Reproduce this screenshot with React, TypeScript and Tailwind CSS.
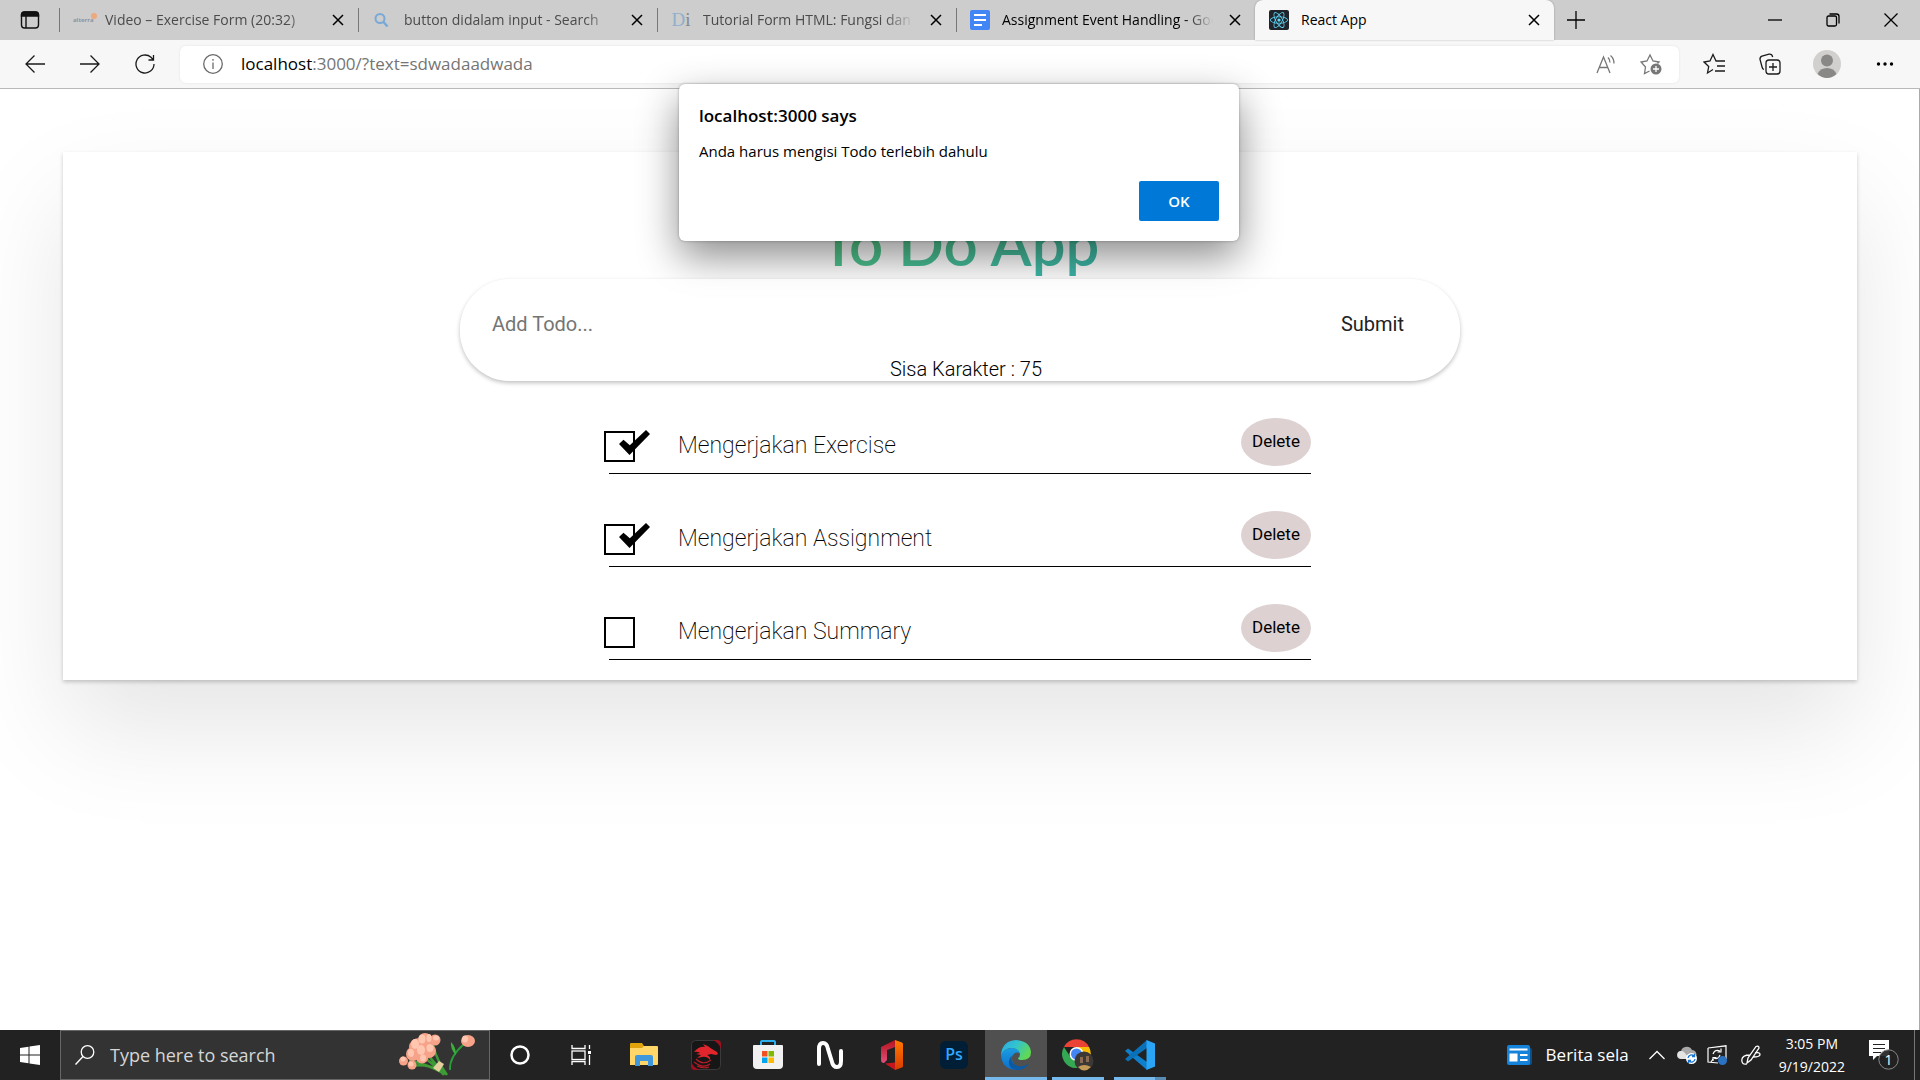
import React, { useState } from "react";
import { FaReact } from "react-icons/fa";

type IconProps = { className?: string; children: React.ReactNode; box?: string };

function Line({ className = "size-5", children, box = "0 0 20 20" }: IconProps) {
  return (
    <svg viewBox={box} className={className} fill="none" stroke="currentColor" strokeWidth="1.3" aria-hidden="true">
      {children}
    </svg>
  );
}

function CloseIcon({ className = "size-3" }: { className?: string }) {
  return (
    <svg viewBox="0 0 12 12" className={className} fill="none" stroke="currentColor" strokeWidth="1.5" aria-hidden="true">
      <path d="M1 1l10 10M11 1L1 11" />
    </svg>
  );
}

/* ---------- Tab strip ---------- */

const tabs = [
  {
    title: "Video – Exercise Form (20:32)",
    tone: "text-[#4b4b4b]",
    icon: (
      <span className="relative block w-5 text-[6px] leading-[6px] font-bold text-[#8e93a3]">
        alterra
        <span className="absolute -top-1 -right-1 size-1.5 rounded-full bg-[#eda87c]" />
      </span>
    ),
  },
  {
    title: "button didalam input - Search",
    tone: "text-[#4b4b4b]",
    icon: (
      <svg viewBox="0 0 20 20" className="size-5" fill="none" stroke="#79a9d6" aria-hidden="true">
        <circle cx="8" cy="8.500" r="4.500" strokeWidth="2" />
        <path d="M11.500 12l4 4.500" strokeWidth="2.500" />
      </svg>
    ),
  },
  {
    title: "Tutorial Form HTML: Fungsi dan Cara",
    tone: "text-[#4b4b4b]",
    icon: (
      <span className="font-['Liberation_Serif',serif] text-[19px] leading-5 text-[#8fb0cc]">
        D<span className="text-[#888]">i</span>
      </span>
    ),
  },
  {
    title: "Assignment Event Handling - Google Docs",
    tone: "text-black",
    icon: (
      <svg viewBox="0 0 20 20" className="size-5" aria-hidden="true">
        <rect width="20" height="20" rx="2" fill="#4285f4" />
        <path d="M4 5h12M4 10h12M4 15h8" stroke="#fff" strokeWidth="2.200" />
      </svg>
    ),
  },
];

function TabStrip() {
  return (
    <div className="flex h-10 items-stretch bg-[#cdcdcd] text-[14px]">
      <button aria-label="Tab actions" className="flex w-[59px] shrink-0 items-center justify-center">
        <svg viewBox="0 0 20 20" className="size-5" fill="none" stroke="#111" strokeWidth="1.400" aria-hidden="true">
          <rect x="1.500" y="2" width="17" height="16" rx="3" />
          <path d="M1.500 6V5a3 3 0 0 1 3-3h11a3 3 0 0 1 3 3v1z" fill="#111" />
          <path d="M6 6v12" />
        </svg>
      </button>
      {tabs.map((tab) => (
        <div key={tab.title} className="relative flex w-[299px] min-w-0 items-center px-3.5 pb-px">
          <span className="absolute top-2 left-0 h-6 w-px bg-[#777]" />
          <span className="flex w-5 shrink-0 justify-center">{tab.icon}</span>
          <a
            href="#tab"
            className={
              "ml-3 flex-1 overflow-hidden whitespace-nowrap [mask-image:linear-gradient(to_right,#000_86%,transparent)] " +
              tab.tone
            }
          >
            {tab.title}
          </a>
          <button aria-label="Close tab" className="ml-4 shrink-0 text-black">
            <CloseIcon />
          </button>
        </div>
      ))}
      <div className="flex w-[299px] min-w-0 items-center rounded-t-lg bg-[#f7f7f7] px-3.5 pb-px shadow-[0_0_2px_rgba(0,0,0,0.3)]">
        <span className="flex size-5 shrink-0 items-center justify-center rounded-xs bg-[#20232a] text-[#61dafb]">
          <FaReact className="size-4.5" />
        </span>
        <a href="#tab" className="ml-3 flex-1 text-black">
          React App
        </a>
        <button aria-label="Close tab" className="text-black">
          <CloseIcon />
        </button>
      </div>
      <button aria-label="New tab" className="ml-3 flex items-center">
        <Line>
          <path d="M10 1v18M1 10h18" />
        </Line>
      </button>
      <div className="ml-auto flex">
        <button aria-label="Minimize" className="flex w-[58px] items-center justify-center">
          <Line className="size-[14px]" box="0 0 14 14">
            <path d="M0 7h14" />
          </Line>
        </button>
        <button aria-label="Restore" className="flex w-[58px] items-center justify-center">
          <Line className="size-[14px]" box="0 0 14 14">
            <rect x="1" y="3" width="9.500" height="10" rx="1.500" />
            <path d="M3.500 1h7q2.500 0 2.500 2.500v7" />
          </Line>
        </button>
        <button aria-label="Close window" className="flex w-[58px] items-center justify-center">
          <Line className="size-[14px]" box="0 0 14 14">
            <path d="M.5.500l13 13M13.500.500l-13 13" />
          </Line>
        </button>
      </div>
    </div>
  );
}

/* ---------- Address bar ---------- */

function AddressBar() {
  return (
    <div className="flex h-[49px] items-center border-b border-[#b9b9b9] bg-[#f7f7f7] pl-[7px] text-[#1b1b1b]">
      <button aria-label="Back" className="flex w-[55px] justify-center">
        <Line>
          <path d="M20 10H1M9.500 1.500L1 10l8.500 8.500" />
        </Line>
      </button>
      <button aria-label="Forward" className="flex w-[55px] justify-center">
        <Line>
          <path d="M0 10h19M10.500 1.500L19 10l-8.500 8.500" />
        </Line>
      </button>
      <button aria-label="Refresh" className="flex w-[55px] justify-center">
        <Line>
          <path d="M19 10a9 9 0 1 1-3-6.700L18.500 6M18.500 1v5h-5" />
        </Line>
      </button>
      <div className="ml-2 flex h-[37px] min-w-0 flex-1 items-center rounded-md bg-white pr-[17px] pl-[23px] shadow-[0_0_3px_rgba(0,0,0,0.08)]">
        <Line className="size-5 shrink-0 text-[#6b6b6b]">
          <circle cx="10" cy="10" r="9.300" />
          <path d="M10 8.500V15M10 5v1.800" />
        </Line>
        <a href="#address" className="ml-[18px] flex-1 text-[17px] text-[#757575]">
          <span className="text-black">localhost</span>:3000/?text=sdwadaadwada
        </a>
        <button aria-label="Read aloud" className="mr-6 text-[#777]">
          <Line>
            <path d="M1 19L7.500 3 14 19M3.300 13.500h8.400M12 3.500c1.500 1.500 2 3 2 5M14.500 1.500c2.500 2 3.500 4.500 3.500 8" />
          </Line>
        </button>
        <button aria-label="Add to favorites" className="text-[#777]">
          <Line className="size-[22px]" box="0 0 22 22">
            <path d="M9.500 18l-5 2.500 1-6.500L1 9l6-1 3-6 3 6 6 1-1.500 1.500" />
            <circle cx="16" cy="16" r="5.500" fill="currentColor" stroke="none" />
            <path d="M16 13v6M13 16h6" stroke="#fff" />
          </Line>
        </button>
      </div>
      <div className="flex shrink-0 items-center pr-1.5 pl-[7px]">
        <button aria-label="Favorites" className="flex w-14 justify-center">
          <Line className="size-[22px]" box="0 0 22 22">
            <path d="M10 16.500l-5.500 3.500 1.200-6.500L1 9l6-1 3-6.500L13 8M12.500 8H22M14 13h8M12 18h10" />
          </Line>
        </button>
        <button aria-label="Collections" className="flex w-14 justify-center">
          <Line className="size-[22px]" box="0 0 22 22">
            <rect x="7" y="7" width="14" height="14" rx="3" />
            <path d="M14 10v8M10 14h8M5 16.500Q3.500 16 3.200 14.500L1 6.500Q.8 4 3 3.200l7-2Q13 .8 13.700 4" />
          </Line>
        </button>
        <button aria-label="Profile" className="flex w-[58px] justify-center">
          <svg viewBox="0 0 28 28" className="size-7" aria-hidden="true">
            <circle cx="14" cy="14" r="14" fill="#d2d0ce" />
            <circle cx="14" cy="10.500" r="6" fill="#8a8886" />
            <path d="M4.500 24Q7 18 14 18t9.500 6Q19 28 14 28t-9.500-4z" fill="#8a8886" />
          </svg>
        </button>
        <button aria-label="Settings" className="flex w-[58px] justify-center">
          <svg viewBox="0 0 18 4" className="w-[18px]" aria-hidden="true">
            <circle cx="2.500" cy="2" r="1.700" />
            <circle cx="9" cy="2" r="1.700" />
            <circle cx="15.500" cy="2" r="1.700" />
          </svg>
        </button>
      </div>
    </div>
  );
}

function AlertDialog() {
  return (
    <div
      role="alertdialog"
      aria-labelledby="alert-title"
      className="absolute top-[84px] left-1/2 z-10 flex w-[560px] -translate-x-[calc(50%+1px)] flex-col rounded-md bg-white p-5 text-black shadow-[0_0_3px_rgba(0,0,0,0.3),0_16px_40px_rgba(0,0,0,0.45)]"
    >
      <h2 id="alert-title" className="text-[17px] leading-6 font-semibold">
        localhost:3000 says
      </h2>
      <p className="mt-[11px] text-[15px] leading-6">Anda harus mengisi Todo terlebih dahulu</p>
      <button className="mt-[18px] h-10 w-20 self-end rounded-xs bg-[#0078d7] text-[15px] font-semibold text-white">
        OK
      </button>
    </div>
  );
}

/* ---------- To Do card ---------- */

const initialTodos = [
  { id: "exercise", title: "Mengerjakan Exercise", done: true },
  { id: "assignment", title: "Mengerjakan Assignment", done: true },
  { id: "summary", title: "Mengerjakan Summary", done: false },
];

function TodoCard() {
  const [todos, setTodos] = useState(initialTodos);
  const toggle = (id: string) => setTodos(todos.map((t) => (t.id === id ? { ...t, done: !t.done } : t)));

  return (
    <section className="mt-[63px] mr-[62px] ml-[63px] flex flex-col items-center bg-white pt-[55px] pb-5 font-['Roboto',sans-serif] font-light text-black shadow-[0_2px_4px_rgba(0,0,0,0.2),0_50px_100px_rgba(0,0,0,0.1)]">
      <h1 className="bg-linear-to-br from-[#5ecf70] to-[#38b2ac] bg-clip-text font-['Lato',sans-serif] text-[60px] leading-[72px] font-semibold text-transparent">
        To Do App
      </h1>
      <form
        onSubmit={(e) => e.preventDefault()}
        className="relative z-20 w-full max-w-[1000px] rounded-[50px] bg-white/65 shadow-[0_2px_4px_rgba(0,0,0,0.25)]"
      >
        <div className="flex h-[78px] items-center pt-3 pr-14 pl-8 text-[20px] font-normal">
          <input
            aria-label="Add Todo"
            placeholder="Add Todo..."
            className="min-w-0 flex-1 bg-transparent outline-none placeholder:text-[#757575]"
          />
          <button className="text-[#222]">Submit</button>
        </div>
        <p className="pl-3 text-center text-[20px] leading-6">Sisa Karakter : 75</p>
      </form>
      <ul className="w-full max-w-[702px]">
        {todos.map((todo) => (
          <li key={todo.id} className="flex items-end border-b border-black pt-[37px] pb-[7px]">
            <span className="relative mb-1 -ml-[5px] size-[31px] shrink-0">
              <input
                id={todo.id}
                type="checkbox"
                checked={todo.done}
                onChange={() => toggle(todo.id)}
                className="block size-[31px] appearance-none border-2 border-black"
              />
              {todo.done && (
                <svg
                  viewBox="0 0 31 25"
                  className="pointer-events-none absolute -top-px left-[15px] h-[25px] w-[31px]"
                  aria-hidden="true"
                >
                  <path d="M0 14l4.500-4.300 6.300 5.600L27 0l4 4-20.500 21z" />
                </svg>
              )}
            </span>
            <label htmlFor={todo.id} className="mb-1 ml-[43px] flex-1 text-[23px] leading-8 font-extralight">
              {todo.title}
            </label>
            <button
              aria-label={"Delete " + todo.title}
              onClick={() => setTodos(todos.filter((t) => t.id !== todo.id))}
              className="h-12 w-[70px] rounded-[50%] bg-[#ddd1d1] text-[17px] font-normal"
            >
              Delete
            </button>
          </li>
        ))}
      </ul>
    </section>
  );
}

/* ---------- Taskbar ---------- */

function Flowers() {
  return (
    <svg viewBox="0 0 76 44" className="h-11 w-[76px]" aria-hidden="true">
      <g stroke="#3d9b35" strokeWidth="2.500" fill="none">
        <path d="M10 28Q26 30 46 41M18 20Q32 28 45 42M28 20Q36 32 47 41M34 12Q38 28 48 42M12 33Q26 30 44 38" />
        <path d="M51 37Q50 24 65 11" stroke="#2c9a3a" strokeWidth="1.800" />
        <path d="M57 22Q51 16 52 9Q57 14 57 22z" fill="#3fae3d" stroke="none" />
      </g>
      <path d="M34 35l6-7 5 3-5 8z" fill="#e6cf9f" />
      <g fill="#f7a38a">
        <ellipse cx="20" cy="14" rx="10" ry="9" />
        <circle cx="14" cy="21" r="7" />
        <circle cx="26" cy="7" r="7" />
        <circle cx="30" cy="18" r="7" />
        <circle cx="23" cy="24" r="6.500" />
        <circle cx="36" cy="7" r="5.500" />
        <circle cx="4.500" cy="28" r="4.500" />
        <circle cx="13" cy="32" r="4.500" />
        <ellipse cx="69" cy="8" rx="7" ry="6" />
      </g>
      <g fill="#ffc6b0">
        <ellipse cx="16" cy="11" rx="4" ry="5" />
        <ellipse cx="23" cy="6" rx="3.500" ry="4.500" />
        <ellipse cx="30" cy="5" rx="2.500" ry="4" />
        <ellipse cx="31" cy="15" rx="3.500" ry="4" />
        <ellipse cx="22" cy="17" rx="4" ry="5" />
        <ellipse cx="12" cy="20" rx="3" ry="4" />
        <ellipse cx="24" cy="25" rx="3" ry="3.500" />
        <ellipse cx="37" cy="5" rx="3" ry="2.500" />
        <circle cx="4" cy="26" r="2.500" />
        <circle cx="12" cy="31" r="2.500" />
        <ellipse cx="66" cy="6" rx="3" ry="3.500" />
      </g>
    </svg>
  );
}

const apps = [
  {
    name: "Cortana",
    state: "idle",
    icon: (
      <svg viewBox="0 0 30 30" className="size-[30px]" fill="none" aria-hidden="true">
        <circle cx="15" cy="15" r="8.500" stroke="#fff" strokeWidth="2.500" />
      </svg>
    ),
  },
  {
    name: "Task View",
    state: "idle",
    icon: (
      <svg viewBox="0 0 22 20" className="h-5 w-[22px]" fill="none" stroke="#fff" strokeWidth="1.300" aria-hidden="true">
        <path d="M1 0v3.500h13V0M1 20v-3.500h13V20M18.500 0v4M18.500 10v10" />
        <rect x="1" y="6" width="13" height="8.500" />
        <path d="M17 6h3v3h-3z" fill="#fff" stroke="none" />
      </svg>
    ),
  },
  {
    name: "File Explorer",
    state: "idle",
    icon: (
      <svg viewBox="0 0 28 24" className="h-6 w-7" aria-hidden="true">
        <path d="M0 1q0-1 1-1h11l2 3v3H0z" fill="#e0a30c" />
        <path d="M0 5h12l2-2h13q1 0 1 1v17q0 1-1 1H0z" fill="#ffd667" />
        <path d="M5 23v-9q0-2 2-2h14q2 0 2 2v9h-5v-5h-8v5z" fill="#3f97dc" />
      </svg>
    ),
  },
  {
    name: "Dragon Center",
    state: "idle",
    icon: (
      <svg viewBox="0 0 30 30" className="size-[30px]" aria-hidden="true">
        <rect x=".5" y=".5" width="29" height="29" rx="4" fill="#161616" stroke="#3a3a3a" />
        <path d="M22 0h4q4 0 4 4v5q-2-6-8-9zM0 22v4q0 4 4 4h5q-7-3-9-8z" fill="#9d1020" />
        <path d="M3 12Q8 6 14 7l-2-3q6 2 9 5l5 3 1 2-2 1-5-1-4 1q4 2 3 5-3-4-8-3l-5 1 4-3-5-1 4-1q-3-2-6-1z" fill="#e0262c" />
        <path d="M5 19q7 7 15 1M3 22q9 7 16 2M6 26q7 3 12 1" stroke="#b81c26" strokeWidth="1.100" fill="none" />
      </svg>
    ),
  },
  {
    name: "Microsoft Store",
    state: "idle",
    icon: (
      <svg viewBox="0 0 30 30" className="size-[30px]" aria-hidden="true">
        <path d="M8 6V2q0-1 1-1h12q1 0 1 1v4" stroke="#2bb0ee" strokeWidth="2" fill="none" />
        <path d="M0 6q0-1 1-1h28q1 0 1 1v19q0 4-4 4H4q-4 0-4-4z" fill="#f1f1f1" />
        <path d="M9 11h5.500v5.500H9z" fill="#f25022" />
        <path d="M15.500 11H21v5.500h-5.500z" fill="#7fba00" />
        <path d="M9 17.500h5.500V23H9z" fill="#00a4ef" />
        <path d="M15.500 17.500H21V23h-5.500z" fill="#ffb900" />
      </svg>
    ),
  },
  {
    name: "Nahimic",
    state: "idle",
    icon: (
      <svg viewBox="0 0 30 30" className="size-[30px]" fill="none" stroke="#fff" strokeWidth="4" strokeLinecap="round" aria-hidden="true">
        <path d="M4 24V9Q4 3 8 3t5 6l4 13q1 5 5 5t4-6V11" />
      </svg>
    ),
  },
  {
    name: "Office",
    state: "idle",
    icon: (
      <svg viewBox="0 0 24 30" className="h-[30px] w-6" aria-hidden="true">
        <defs>
          <linearGradient id="office-left" x1="0" y1="0" x2="0" y2="1">
            <stop offset="0" stopColor="#b5121b" />
            <stop offset="1" stopColor="#e0507c" />
          </linearGradient>
          <linearGradient id="office-right" x1="0" y1="0" x2="0" y2="1">
            <stop offset="0" stopColor="#ff7a00" />
            <stop offset="1" stopColor="#d83b01" />
          </linearGradient>
        </defs>
        <path d="M1 7L15 0v7L7 10v10l-3 3q-3 0-3-3z" fill="url(#office-left)" />
        <path d="M15 0l7 2.500q1 .5 1 1.500v22q0 1-1 1.500L15 30z" fill="url(#office-right)" />
        <path d="M5 23.500l10-1V30z" fill="#c4161c" />
      </svg>
    ),
  },
  {
    name: "Photoshop",
    state: "idle",
    icon: (
      <span className="flex h-7 w-7 items-center justify-center rounded-md bg-[#001e36] pb-0.5 text-[16px] font-semibold text-[#31a8ff]">
        Ps
      </span>
    ),
  },
  {
    name: "Microsoft Edge",
    state: "active",
    icon: (
      <svg viewBox="0 0 30 30" className="size-[30px]" aria-hidden="true">
        <defs>
          <linearGradient id="edge-top" x1="0" y1="0" x2="1" y2=".5">
            <stop offset="0" stopColor="#2aa7e6" />
            <stop offset=".5" stopColor="#33c3cf" />
            <stop offset="1" stopColor="#5fd954" />
          </linearGradient>
          <linearGradient id="edge-body" x1="0" y1="0" x2="0" y2="1">
            <stop offset="0" stopColor="#1b9de2" />
            <stop offset="1" stopColor="#0d6fc9" />
          </linearGradient>
        </defs>
        <path d="M0 15Q1 1 15 0q14 1 15 12 0 8-9 8-4 0-4-2 2-1 2-4-2-6-9-6Q4 8 0 15z" fill="url(#edge-top)" />
        <path d="M0 15q3-7 11-7 6 0 8 5-6-2-8 4-1 8 9 12-3 1-5 1Q1 29 0 15z" fill="url(#edge-body)" />
        <path d="M11 16q-2 8 6 10 6 1 10-2 1 0 0 1-4 5-11 5-9-1-8-9 0-3 3-5z" fill="#0c59a4" />
      </svg>
    ),
  },
  {
    name: "Google Chrome",
    state: "open",
    icon: (
      <svg viewBox="0 0 32 32" className="size-8" aria-hidden="true">
        <path d="M2 8A14 14 0 0 1 27 8H15z" fill="#ea4335" />
        <path d="M27 8a14 14 0 0 1-12 21l6-12-6-9z" fill="#fbbc05" />
        <path d="M2 8a14 14 0 0 0 13 21l6-10-12 0z" fill="#34a853" />
        <circle cx="14.500" cy="15" r="7" fill="#fff" />
        <circle cx="14.500" cy="15" r="5.500" fill="#4285f4" />
        <circle cx="22" cy="22" r="9.500" fill="#3c3836" />
        <path d="M16 28q6-4 13 0-7 7-13 0z" fill="#c39a58" />
        <path d="M18 18h3v6h-3zM24 17h3v6h-3z" fill="#8b6b52" />
      </svg>
    ),
  },
  {
    name: "Visual Studio Code",
    state: "grouped",
    icon: (
      <svg viewBox="0 0 30 30" className="size-[30px]" aria-hidden="true">
        <path d="M0 11L3 8.500 22 22v8z" fill="#0f7fcb" />
        <path d="M22 0v8L3 21.500 0 19z" fill="#0a70b8" />
        <path d="M21.500 0L30 3.500v23L21.500 30z" fill="#2aa4f4" />
      </svg>
    ),
  },
];

function Taskbar() {
  return (
    <footer className="flex h-[50px] shrink-0 items-stretch bg-[#222] text-white">
      <button aria-label="Start" className="flex w-[60px] shrink-0 items-center justify-center">
        <svg viewBox="0 0 20 20" className="size-5" fill="#fff" aria-hidden="true">
          <path d="M0 3l8.500-1.300v7.800H0zM9.500 1.500L20 0v9.500H9.500zM0 10.500h8.500v7.800L0 17zM9.500 10.500H20V20L9.500 18.500z" />
        </svg>
      </button>
      <label className="flex w-[430px] shrink-0 items-center border border-[#666] bg-[#333] pr-3.5 pl-3.5">
        <Line className="size-5 shrink-0 text-white">
          <circle cx="12.500" cy="7" r="6.300" />
          <path d="M8 11.500L.5 19.500" />
        </Line>
        <input
          aria-label="Type here to search"
          placeholder="Type here to search"
          className="ml-[15px] min-w-0 flex-1 bg-transparent text-[18px] outline-none placeholder:text-[#d6d6d6]"
        />
        <Flowers />
      </label>
      <nav className="-ml-px flex" aria-label="Applications">
        {apps.map((app) => (
          <button
            key={app.name}
            aria-label={app.name}
            className={
              "relative flex w-[62px] items-center justify-center " + (app.state === "active" ? "bg-[#505050]" : "")
            }
          >
            {app.icon}
            {app.state === "active" && <span className="absolute inset-x-0 bottom-0 h-[3px] bg-[#76b9ed]" />}
            {app.state === "open" && <span className="absolute inset-x-[5px] bottom-0 h-[3px] bg-[#76b9ed]" />}
            {app.state === "grouped" && (
              <span className="absolute inset-x-[5px] bottom-0 h-[3px] border-r-[11px] border-[#5a8bb2] bg-[#76b9ed]" />
            )}
          </button>
        ))}
      </nav>
      <div className="ml-auto flex items-center">
        <button className="flex items-center text-[17px]">
          <svg viewBox="0 0 25 20" className="mr-3.5 h-5 w-[25px]" aria-hidden="true">
            <rect x="3" y="3" width="22" height="17" rx="2" fill="#0c4f86" />
            <rect width="23" height="20" rx="2" fill="#1583da" />
            <path d="M2.500 4.500h18M13 10h7.500M13 15h7.500" stroke="#fff" strokeWidth="2" />
            <rect x="2.500" y="8.500" width="8" height="8" fill="#fff" />
          </svg>
          Berita sela
        </button>
        <button aria-label="Show hidden icons" className="ml-5">
          <Line className="h-2.5 w-4" box="0 0 16 10">
            <path d="M.5 9L8 1.500 15.500 9" />
          </Line>
        </button>
        <svg viewBox="0 0 20 18" className="ml-3 h-[18px] w-5" aria-hidden="true">
          <path d="M4 13a4 4 0 0 1 0-8 6 6 0 0 1 11-1 4.500 4.500 0 0 1 2 8.500z" fill="#a8a8a8" />
          <path d="M4 13a4 4 0 1 1 3-7l6 7z" fill="#e4e4e4" />
          <circle cx="14.500" cy="12.500" r="5.500" fill="#fff" />
          <path d="M11 12a3.500 3.500 0 0 1 6-2M18 13a3.500 3.500 0 0 1-6 2M17.500 8v2.500H15M11.500 17v-2.500H14" stroke="#1874d0" strokeWidth="1.300" fill="none" />
        </svg>
        <svg viewBox="0 0 20 20" className="ml-2.5 size-5" fill="none" stroke="#fff" strokeWidth="1.200" aria-hidden="true">
          <path d="M1 3L19 .8V14M1 3v14l10 1M6 14l-2 3" />
          <path d="M6 9q2-5 7-3M14 3.500V7h-3.500M13 10q-2 5-6 3M6 16v-3.500h3.500" />
          <circle cx="15.500" cy="15.500" r="4.500" fill="#2b73c2" stroke="none" />
        </svg>
        <svg viewBox="0 0 20 20" className="ml-3.5 size-5" fill="none" stroke="#fff" strokeWidth="1.300" aria-hidden="true">
          <path d="M6 18L7 13 15 1.500q3-1 3 1.500L10 15zM9 10Q1 10 .8 15t5 4M14 8q5-1 5 1.500T12 12" />
        </svg>
        <time className="ml-[18px] text-center text-[14px] leading-[23px]">
          3:05 PM
          <br />
          9/19/2022
        </time>
        <button aria-label="1 new notification" className="relative ml-6 h-[30px] w-[31px]">
          <svg viewBox="0 0 31 30" className="h-[30px] w-[31px]" aria-hidden="true">
            <path d="M0 0h20v16H8l-4 4v-4H0z" fill="#fff" />
            <path d="M4 4.500h12M4 8.500h12M4 12.500h8" stroke="#222" strokeWidth="1.200" />
            <circle cx="19.500" cy="19.500" r="9.700" fill="#222" fillOpacity=".92" stroke="#888" />
          </svg>
          <span className="absolute top-[9px] left-[9px] w-[21px] text-center text-[14px] leading-[21px]">1</span>
        </button>
        <span className="mr-[5px] ml-3.5 h-[50px] w-px bg-[#777]" />
      </div>
    </footer>
  );
}

export default function App() {
  return (
    <div className="relative flex min-h-screen flex-col bg-white font-['Open_Sans','Noto_Sans',sans-serif]">
      <header>
        <TabStrip />
        <AddressBar />
      </header>
      <main className="flex-1 overflow-hidden border-r border-[#aaa] bg-white">
        <TodoCard />
      </main>
      <AlertDialog />
      <Taskbar />
    </div>
  );
}
